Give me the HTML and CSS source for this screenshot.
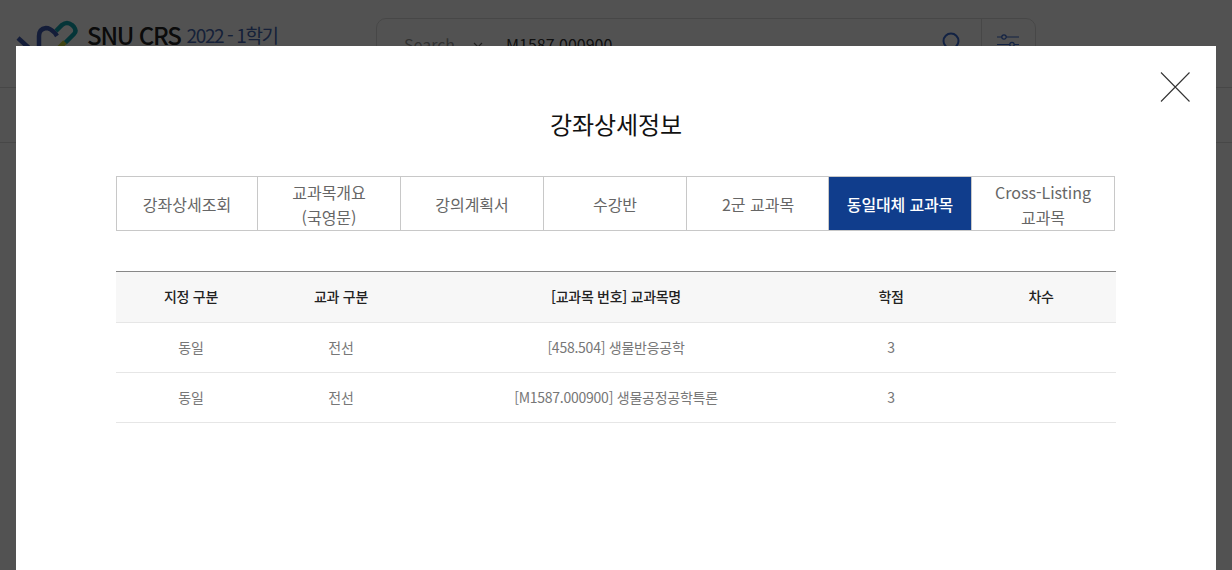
FILE: index.html
```html
<!DOCTYPE html>
<html lang="ko">
<head>
<meta charset="utf-8">
<title>SNU CRS</title>
<link rel="stylesheet" href="styles.css">
</head>
<body>
<header class="top">
  <div class="brand">
    <svg class="logo" width="62" height="30" viewBox="0 0 62 30" fill="none">
      <path d="M2 18 L13 28" stroke="#3f5bb0" stroke-width="4.5"/>
      <path d="M23 30 L23 16 Q23 9 30 8 Q34 8 39 13 L41 16" stroke="#3f5bb0" stroke-width="4.5" fill="none"/>
      <path d="M40 11 L46 5 Q51 1 56 5 L58 7 Q61 11 58 14 L49 23" stroke="#12a5ad" stroke-width="4.5" fill="none"/>
      <path d="M43 28 L49 22" stroke="#c8d23c" stroke-width="5"/>
    </svg>
    <span class="brand-name">SNU CRS</span>
    <span class="brand-term">2022 - 1학기</span>
  </div>
  <div class="search">
    <span class="search-label">Search</span>
    <svg class="chev" width="10" height="6" viewBox="0 0 10 6" fill="none"><path d="M1 1 L5 5 L9 1" stroke="#666" stroke-width="1.2"/></svg>
    <span class="search-value">M1587.000900</span>
    <svg class="mag" width="22" height="22" viewBox="0 0 22 22" fill="none"><circle cx="10" cy="10" r="7.5" stroke="#3a6ad0" stroke-width="2"/><path d="M15.5 15.5 L20 20" stroke="#3a6ad0" stroke-width="2"/></svg>
    <span class="filter">
      <svg width="22" height="18" viewBox="0 0 22 18" fill="none" stroke="#3a6ad0" stroke-width="1.2"><path d="M0 5 H22 M0 12.5 H22"/><circle cx="7" cy="5" r="2.2" fill="#fff"/><circle cx="15" cy="12.5" r="2.2" fill="#fff"/></svg>
    </span>
  </div>
</header>
<div class="subnav"></div>

<div class="overlay"></div>

<section class="modal">
  <button class="close" aria-label="닫기">
    <svg width="32" height="32" viewBox="0 0 32 32" fill="none"><path d="M2 1.5 L30.5 30.5 M30.5 1.5 L2 30.5" stroke="#333" stroke-width="1.1"/></svg>
  </button>
  <h2 class="title">강좌상세정보</h2>
  <ul class="tabs">
    <li class="tab tab-first">강좌상세조회</li>
    <li class="tab">교과목개요<br>(국영문)</li>
    <li class="tab">강의계획서</li>
    <li class="tab">수강반</li>
    <li class="tab">2군 교과목</li>
    <li class="tab active">동일대체 교과목</li>
    <li class="tab">Cross-Listing<br>교과목</li>
  </ul>
  <table class="list">
    <colgroup>
      <col class="c-sm"><col class="c-sm"><col class="c-lg"><col class="c-sm"><col class="c-sm">
    </colgroup>
    <thead>
      <tr><th>지정 구분</th><th>교과 구분</th><th>[교과목 번호] 교과목명</th><th>학점</th><th>차수</th></tr>
    </thead>
    <tbody>
      <tr><td>동일</td><td>전선</td><td>[458.504] 생물반응공학</td><td>3</td><td></td></tr>
      <tr><td>동일</td><td>전선</td><td>[M1587.000900] 생물공정공학특론</td><td>3</td><td></td></tr>
    </tbody>
  </table>
</section>
</body>
</html>
```
FILE: styles.css
```css
* { box-sizing: border-box; }
html, body {
  margin: 0;
  height: 570px;
  overflow: hidden;
  background: #fff;
  font-family: "Noto Sans CJK KR", "Noto Sans", sans-serif;
}
.top {
  height: 88px;
  border-bottom: 1px solid #ddd;
  display: flex;
  align-items: flex-start;
}
.brand {
  width: 376px;
  padding: 13px 0 0 16px;
  display: flex;
  align-items: flex-start;
  flex: none;
}
.logo { flex: none; margin-top: 7px; margin-right: 9px; }
.brand-name {
  font-size: 24px;
  font-weight: 500;
  line-height: 43px;
  color: #222;
  letter-spacing: -1.2px;
  white-space: nowrap;
}
.brand-term {
  font-size: 19px;
  line-height: 43px;
  color: #4466b0;
  margin-left: 6px;
  letter-spacing: -1.4px;
  white-space: nowrap;
}
.search {
  width: 660px;
  height: 64px;
  margin-top: 18px;
  border: 1px solid #ddd;
  border-radius: 10px;
  display: flex;
  align-items: flex-start;
  padding-left: 27px;
}
.search-label { font-size: 16px; line-height: 50px; color: #999; }
.chev { margin: 23px 0 0 18px; flex: none; }
.search-value { font-size: 16px; line-height: 50px; color: #333; margin-left: 23px; flex: 1; }
.mag { margin: 12px 18px 0 0; flex: none; }
.filter {
  width: 54px;
  height: 100%;
  border-left: 1px solid #ddd;
  padding: 12px 0 0 15px;
  flex: none;
}
.subnav { height: 55px; border-bottom: 1px solid #ddd; }
.overlay {
  position: fixed;
  inset: 0;
  background: rgba(0, 0, 0, 0.68);
}
.modal {
  position: absolute;
  left: 16px;
  top: 46px;
  width: 1200px;
  height: 524px;
  background: #fff;
  padding: 0 100px;
}
.close {
  position: absolute;
  top: 25px;
  right: 25px;
  width: 32px;
  height: 32px;
  padding: 0;
  border: 0;
  background: none;
}
.title {
  margin: 0;
  padding-top: 58px;
  height: 130px;
  font-size: 24px;
  line-height: 40px;
  font-weight: 400;
  text-align: center;
  color: #111;
  letter-spacing: -0.05px;
}
.tabs {
  list-style: none;
  margin: 0;
  padding: 0;
  display: flex;
  height: 55px;
  width: 999px;
  border: 1px solid #c8c8c8;
}
.tab {
  flex: 0 0 143px;
  padding-top: 2px;
  border-left: 1px solid #c8c8c8;
  display: flex;
  align-items: center;
  justify-content: center;
  text-align: center;
  font-size: 16px;
  line-height: 25px;
  color: #666;
  letter-spacing: 0;
}
.tab-first { flex-basis: 140px; border-left: 0; }
.tab:nth-child(6) { margin-left: -1px; }
.active {
  background: #103d8c;
  color: #fff;
  font-weight: 500;
  letter-spacing: -0.15px;
}
.list {
  width: 1000px;
  margin-top: 40px;
  border-collapse: collapse;
  table-layout: fixed;
  border-top: 1px solid #888;
  font-size: 14px;
}
.c-sm { width: 150px; }
.c-lg { width: 400px; }
.list th, .list td {
  height: 50px;
  padding: 0;
  text-align: center;
  border-bottom: 1px solid #e6e6e6;
  letter-spacing: -0.25px;
}
.list th {
  height: 51px;
  padding-bottom: 2px;
  background: #f7f7f7;
  font-weight: 500;
  color: #222;
  letter-spacing: -0.3px;
}
.list td { color: #777; padding-bottom: 2px; }
```
